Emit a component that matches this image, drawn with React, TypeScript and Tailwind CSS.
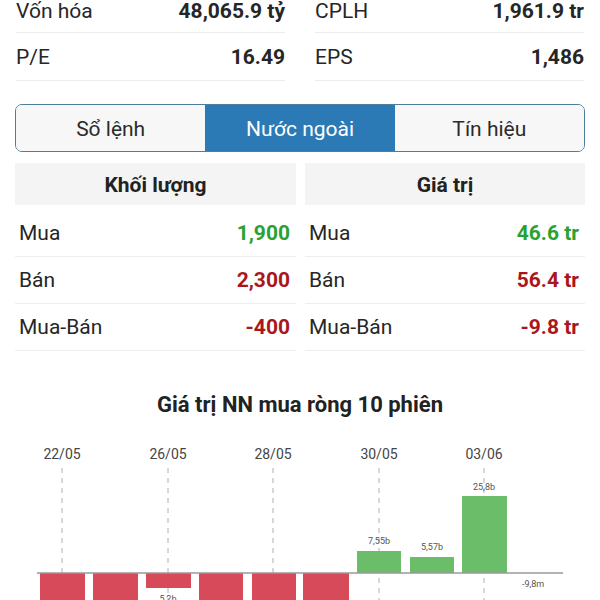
import React from "react";

const font = { fontFamily: "Roboto, 'Noto Sans', sans-serif" };

function InfoRow({ label, value, h }: { label: string; value: string; h: string }) {
  return (
    <div className={`flex ${h} items-center justify-between border-b border-[#ececec] pt-[3px]`}>
      <span className="text-[21px] text-[#262626]">{label}</span>
      <span className="text-[21px] font-bold text-[#262626]">{value}</span>
    </div>
  );
}

function DataRow({ label, value, color }: { label: string; value: string; color: string }) {
  return (
    <div className="flex h-[47px] items-center justify-between border-b border-[#eeeeee] pl-[4px] pr-[6px] pt-[1px]">
      <span className="text-[21px] text-[#262626]">{label}</span>
      <span className={`text-[21px] font-bold ${color}`}>{value}</span>
    </div>
  );
}

const RED = "#d64a5a";
const GREEN = "#6bbd69";

const bars = [
  { x: 40, w: 45, y1: 143, y2: 260, c: RED },
  { x: 93, w: 45, y1: 143, y2: 260, c: RED },
  { x: 146, w: 45, y1: 143, y2: 158, c: RED },
  { x: 199, w: 44, y1: 143, y2: 260, c: RED },
  { x: 252, w: 44, y1: 143, y2: 260, c: RED },
  { x: 303, w: 46, y1: 143, y2: 260, c: RED },
  { x: 357, w: 44, y1: 121, y2: 143, c: GREEN },
  { x: 410, w: 44, y1: 127, y2: 143, c: GREEN },
  { x: 462, w: 45, y1: 66, y2: 143, c: GREEN },
];

const dates = [
  { x: 62, t: "22/05" },
  { x: 168, t: "26/05" },
  { x: 273, t: "28/05" },
  { x: 379, t: "30/05" },
  { x: 484, t: "03/06" },
];

export default function App() {
  return (
    <div className="w-[600px] bg-white" style={font}>
      <div className="px-[15px]">
        <div className="-mt-[12px] grid grid-cols-2 gap-x-[30px] px-[1px]">
          <div>
            <InfoRow label="Vốn hóa" value="48,065.9 tỷ" h="h-[45px]" />
            <InfoRow label="P/E" value="16.49" h="h-[48px]" />
          </div>
          <div>
            <InfoRow label="CPLH" value="1,961.9 tr" h="h-[45px]" />
            <InfoRow label="EPS" value="1,486" h="h-[48px]" />
          </div>
        </div>

        <div className="mt-[23px] grid h-[48px] grid-cols-3 overflow-hidden rounded-[7px] border border-[#4d7f99]">
          <div className="flex items-center justify-center bg-[#f7f7f7] pt-[4px] text-[21px] text-[#2b2b2b]">Sổ lệnh</div>
          <div className="flex items-center justify-center bg-[#2b7ab6] pt-[4px] text-[21px] text-white">Nước ngoài</div>
          <div className="flex items-center justify-center bg-[#f7f7f7] pt-[4px] text-[21px] text-[#2b2b2b]">Tín hiệu</div>
        </div>

        <div className="mt-[11px] grid grid-cols-[281px_280px] gap-x-[9px]">
          <div>
            <div className="flex h-[42px] items-center justify-center bg-[#f4f4f4] pt-[3px] text-[21px] font-bold text-[#222]">Khối lượng</div>
            <div className="mt-[5px]">
              <DataRow label="Mua" value="1,900" color="text-[#2aa232]" />
              <DataRow label="Bán" value="2,300" color="text-[#a9171d]" />
              <DataRow label="Mua-Bán" value="-400" color="text-[#a9171d]" />
            </div>
          </div>
          <div>
            <div className="flex h-[42px] items-center justify-center bg-[#f4f4f4] pt-[3px] text-[21px] font-bold text-[#222]">Giá trị</div>
            <div className="mt-[5px]">
              <DataRow label="Mua" value="46.6 tr" color="text-[#2aa232]" />
              <DataRow label="Bán" value="56.4 tr" color="text-[#a9171d]" />
              <DataRow label="Mua-Bán" value="-9.8 tr" color="text-[#a9171d]" />
            </div>
          </div>
        </div>
      </div>

      <div className="mt-[40px] text-center text-[22px] font-bold leading-[28px] text-[#222]">
        Giá trị NN mua ròng 10 phiên
      </div>

      <svg className="mt-[11px] block" width="600" height="200" viewBox="0 0 600 200">
        {dates.map((d) => (
          <g key={d.t}>
            <text x={d.x} y={29} textAnchor="middle" fontSize="14" fill="#454545" fontFamily="Roboto, sans-serif">
              {d.t}
            </text>
            <line x1={d.x} y1={38} x2={d.x} y2={200} stroke="#b0b0b0" strokeWidth="1" strokeDasharray="5 5" />
          </g>
        ))}
        {bars.map((b, i) => (
          <rect key={i} x={b.x} y={b.y1} width={b.w} height={b.y2 - b.y1} fill={b.c} />
        ))}
        <line x1={37} y1={143} x2={563} y2={143} stroke="#9a9a9a" strokeWidth="1.5" />
        <text x={379} y={114} textAnchor="middle" fontSize="9" fill="#555" fontFamily="Roboto, sans-serif">7,55b</text>
        <text x={432} y={120} textAnchor="middle" fontSize="9" fill="#555" fontFamily="Roboto, sans-serif">5,57b</text>
        <text x={484} y={60} textAnchor="middle" fontSize="9" fill="#555" fontFamily="Roboto, sans-serif">25,8b</text>
        <text x={168} y={172} textAnchor="middle" fontSize="9" fill="#555" fontFamily="Roboto, sans-serif">5,2b</text>
        <text x={522} y={157} fontSize="9" fill="#555" fontFamily="Roboto, sans-serif">-9,8m</text>
      </svg>
    </div>
  );
}
